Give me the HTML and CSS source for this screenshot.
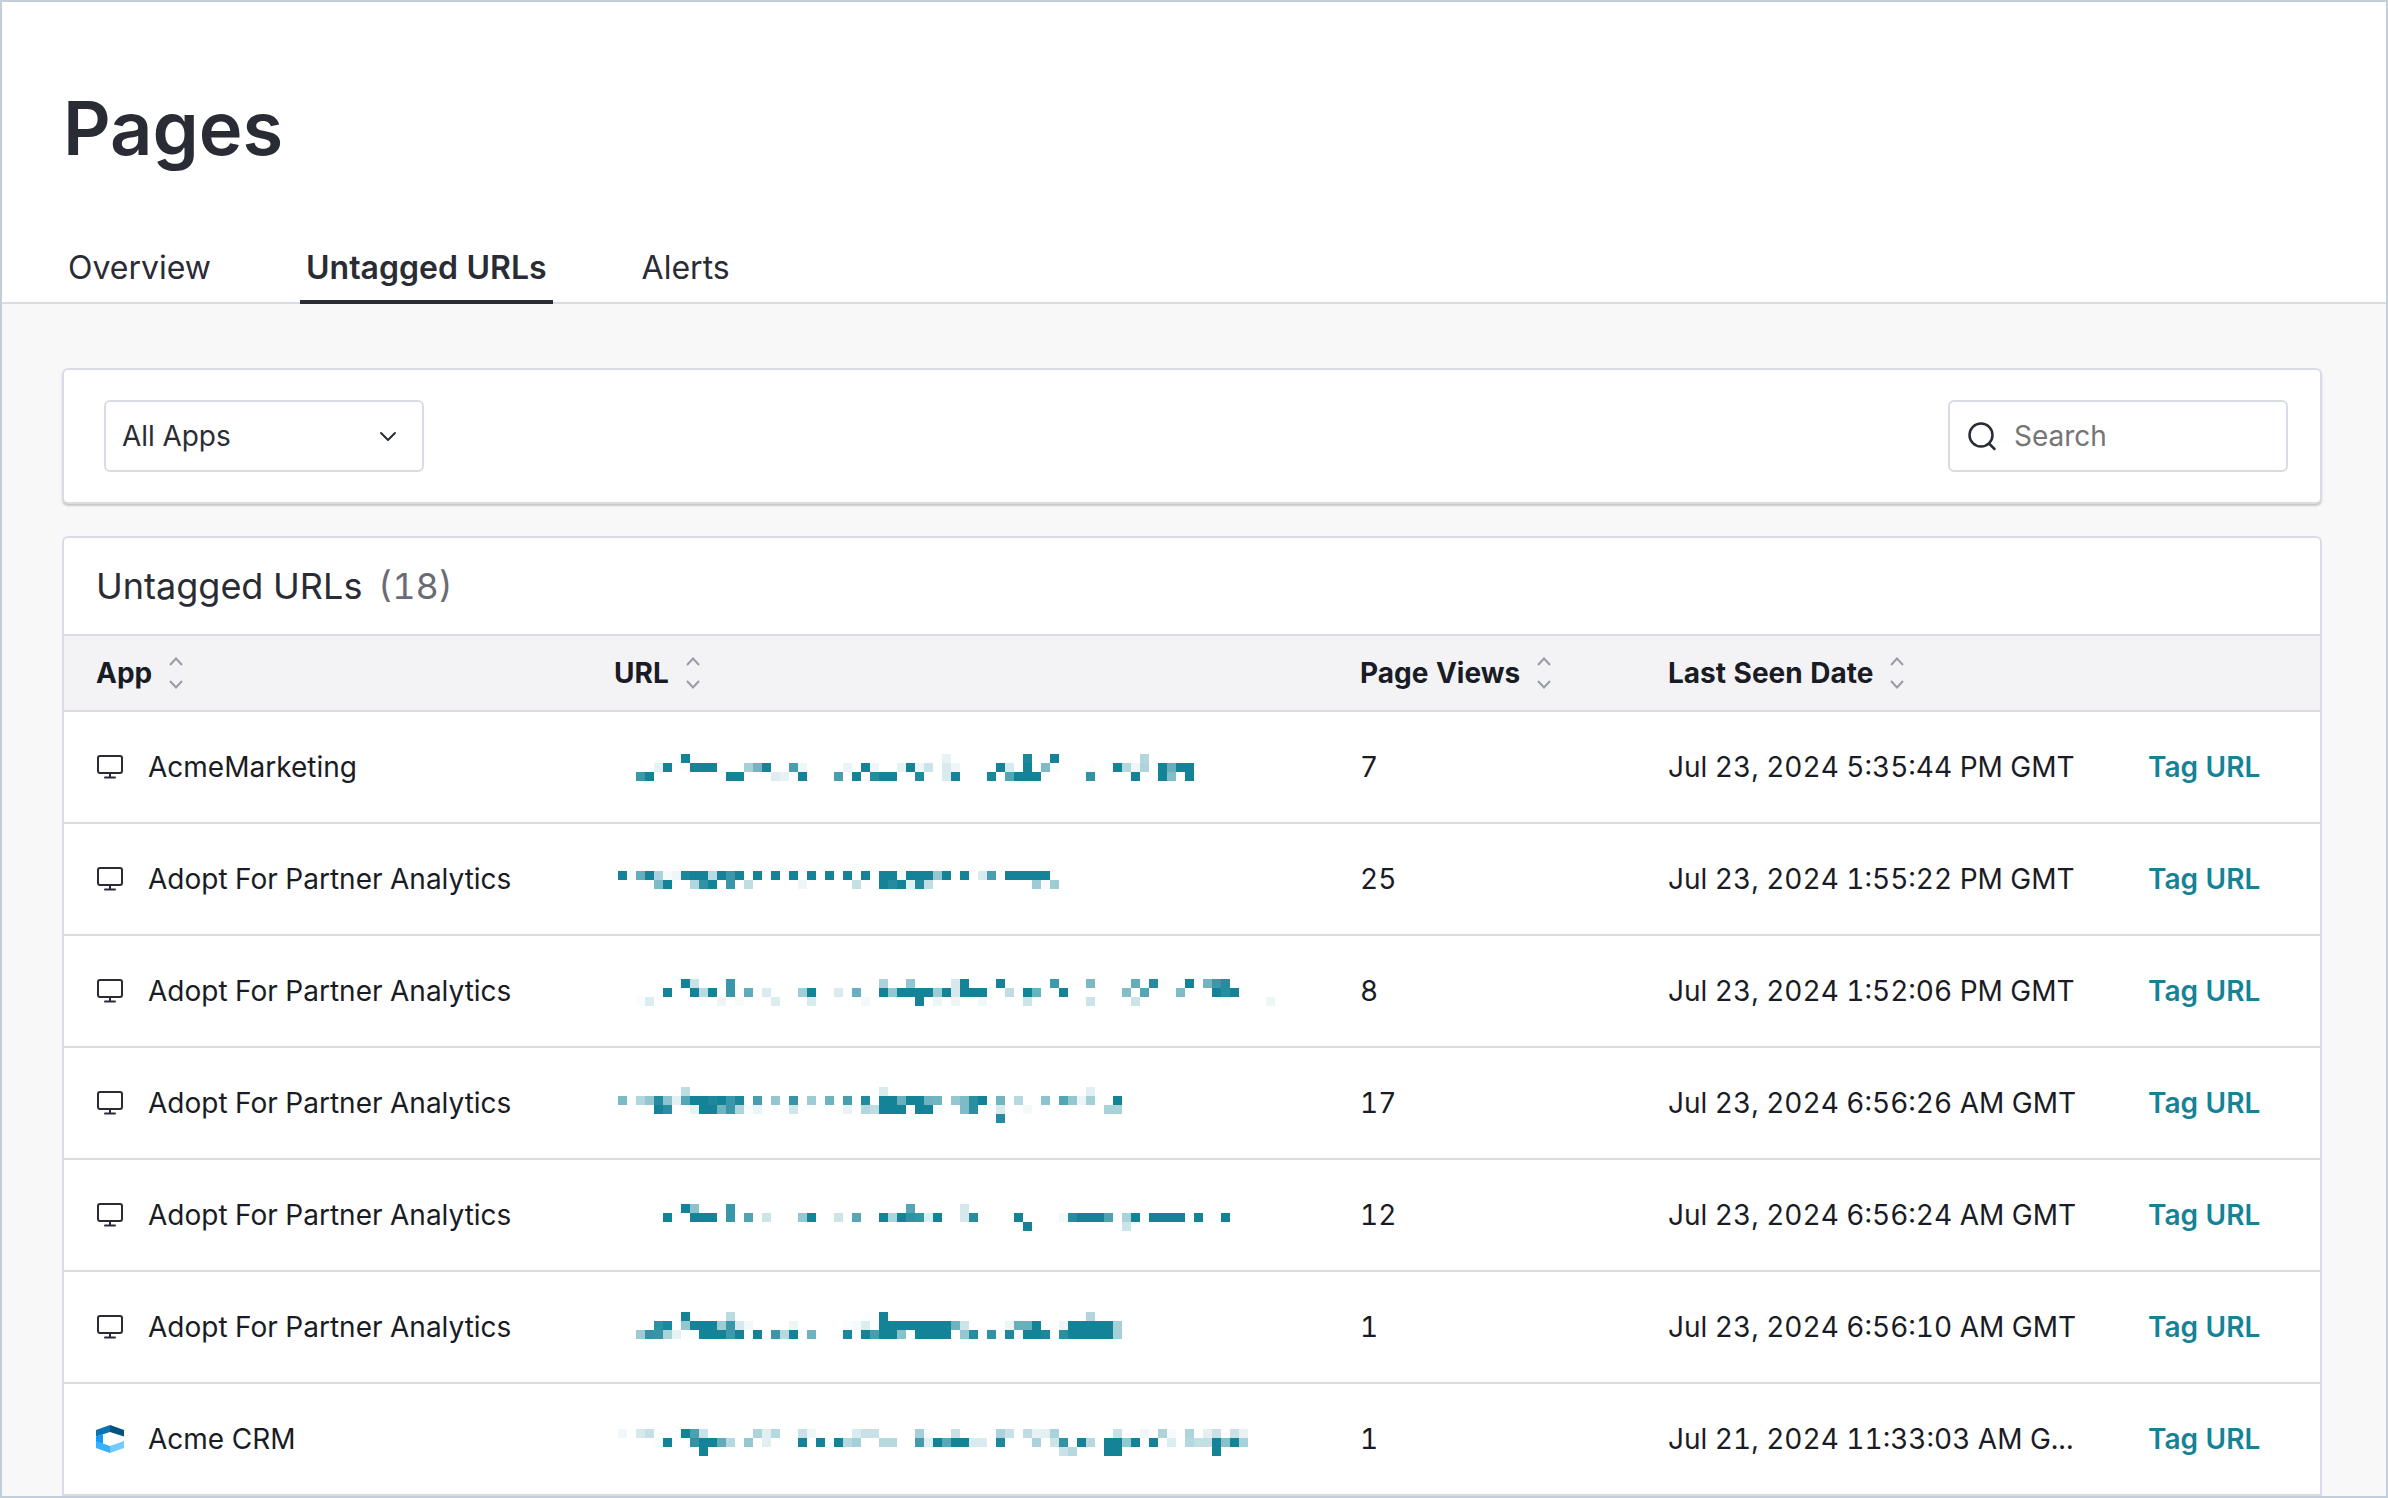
FILE: index.html
```html
<!DOCTYPE html>
<html lang="en">
<head>
    <meta charset="UTF-8">
    <meta name="viewport" content="width=device-width, initial-scale=1.0">
    <title>Pages</title>

    <link rel="stylesheet" href="styles.css">
</head>
<body>
    <svg class="defs" aria-hidden="true">
        <symbol id="monitor" viewBox="0 0 28 28">
            <g fill="none" stroke="#2a2c35" stroke-width="2" stroke-linecap="round">
                <rect x="2" y="3" width="24" height="17" rx="2"/>
                <path d="M14 20v4M9 24.500h10"/>
            </g>
        </symbol>
        <symbol id="sort" viewBox="0 0 16 34">
            <path d="M2 9l6-6.500 6 6.500M2 25l6 6.500 6-6.500" fill="none" stroke="#9a9ca5" stroke-width="2"/>
        </symbol>
        <symbol id="crm" viewBox="0 0 28 28">
            <path d="M0 5l14-5v7L0 11.500z" fill="#0a72b5"/>
            <path d="M14 0l14 5v6.500L14 7z" fill="#04507f"/>
            <path d="M0 11.500L7 9v10l-7-2z" fill="#0d9bf5"/>
            <path d="M0 16l14 5v7L0 23z" fill="#36b0ff"/>
            <path d="M14 21l14-5v7l-14 5z" fill="#72caff"/>
        </symbol>
    </svg>

    <div class="frame">
        <header class="page-header">
            <h1>Pages</h1>
            <nav class="tabs">
                <a href="#overview" class="tab">Overview</a>
                <a href="#untagged" class="tab active" aria-current="page">Untagged URLs</a>
                <a href="#alerts" class="tab">Alerts</a>
            </nav>
        </header>

        <main>
            <div class="panel filters">
                <div class="app-select">
                    <select aria-label="App">
                        <option>All Apps</option>
                    </select>
                    <svg class="chevron" viewBox="0 0 20 20" aria-hidden="true"><path d="M3 7l7 7 7-7" fill="none" stroke="#2a2c35" stroke-width="2" stroke-linecap="round" stroke-linejoin="round"/></svg>
                </div>
                <label class="search">
                    <svg class="search-icon" viewBox="0 0 30 30" aria-hidden="true"><g fill="none" stroke="#2a2c35" stroke-width="2.500" stroke-linecap="round"><circle cx="13" cy="14" r="11.500"/><path d="M21 22.500L26.500 28"/></g></svg>
                    <input type="search" placeholder="Search" aria-label="Search">
                </label>
            </div>

            <section class="panel results">
                <h2>Untagged URLs <span class="count">(18)</span></h2>
                <table>
                    <colgroup>
                        <col class="col-app">
                        <col class="col-url">
                        <col class="col-views">
                        <col class="col-date">
                        <col class="col-action">
                    </colgroup>
                    <thead>
                        <tr>
                            <th><button>App <svg class="sort"><use href="#sort"/></svg></button></th>
                            <th><button>URL <svg class="sort"><use href="#sort"/></svg></button></th>
                            <th><button>Page Views <svg class="sort"><use href="#sort"/></svg></button></th>
                            <th><button>Last Seen Date <svg class="sort"><use href="#sort"/></svg></button></th>
                            <th></th>
                        </tr>
                    </thead>
                    <tbody>
                        <tr>
                            <td><div class="app"><svg class="icon"><use href="#monitor"/></svg>AcmeMarketing</div></td>
                            <td class="url"></td>
                            <td>7</td>
                            <td class="date">Jul 23, 2024 5:35:44 PM GMT</td>
                            <td><a href="#tag" class="tag">Tag URL</a></td>
                        </tr>
                        <tr>
                            <td><div class="app"><svg class="icon"><use href="#monitor"/></svg>Adopt For Partner Analytics</div></td>
                            <td class="url"></td>
                            <td>25</td>
                            <td class="date">Jul 23, 2024 1:55:22 PM GMT</td>
                            <td><a href="#tag" class="tag">Tag URL</a></td>
                        </tr>
                        <tr>
                            <td><div class="app"><svg class="icon"><use href="#monitor"/></svg>Adopt For Partner Analytics</div></td>
                            <td class="url"></td>
                            <td>8</td>
                            <td class="date">Jul 23, 2024 1:52:06 PM GMT</td>
                            <td><a href="#tag" class="tag">Tag URL</a></td>
                        </tr>
                        <tr>
                            <td><div class="app"><svg class="icon"><use href="#monitor"/></svg>Adopt For Partner Analytics</div></td>
                            <td class="url"></td>
                            <td>17</td>
                            <td class="date">Jul 23, 2024 6:56:26 AM GMT</td>
                            <td><a href="#tag" class="tag">Tag URL</a></td>
                        </tr>
                        <tr>
                            <td><div class="app"><svg class="icon"><use href="#monitor"/></svg>Adopt For Partner Analytics</div></td>
                            <td class="url"></td>
                            <td>12</td>
                            <td class="date">Jul 23, 2024 6:56:24 AM GMT</td>
                            <td><a href="#tag" class="tag">Tag URL</a></td>
                        </tr>
                        <tr>
                            <td><div class="app"><svg class="icon"><use href="#monitor"/></svg>Adopt For Partner Analytics</div></td>
                            <td class="url"></td>
                            <td>1</td>
                            <td class="date">Jul 23, 2024 6:56:10 AM GMT</td>
                            <td><a href="#tag" class="tag">Tag URL</a></td>
                        </tr>
                        <tr>
                            <td><div class="app"><svg class="icon"><use href="#crm"/></svg>Acme CRM</div></td>
                            <td class="url"></td>
                            <td>1</td>
                            <td class="date">Jul 21, 2024 11:33:03 AM G...</td>
                            <td><a href="#tag" class="tag">Tag URL</a></td>
                        </tr>
                    </tbody>
                </table>
            </section>
        </main>
    </div>

    <script src="mosaic.js"></script>
</body>
</html>
```
FILE: styles.css
```css
:root {
    --ink: #2a2c35;
    --ink-dark: #1a1c25;
    --gray: #6a6c75;
    --line: #dadce5;
    --teal: #148398;
    --frame: #c2ced9;
}

* {
    box-sizing: border-box;
    margin: 0;
    padding: 0;
}

body {
    font-family: Inter, "Liberation Sans", sans-serif;
    font-size: 28px;
    line-height: 36px;
    font-variant-numeric: tabular-nums;
    color: var(--ink-dark);
}

button, input, select {
    font: inherit;
    color: inherit;
    background: none;
    border: none;
}

a {
    text-decoration: none;
    color: inherit;
}

svg {
    display: block;
    flex: none;
}

.defs {
    display: none;
}

.frame {
    display: flex;
    flex-direction: column;
    min-height: 100vh;
    border: 2px solid var(--frame);
    background-color: #f8f8f8;
}

/* header */
.page-header {
    padding: 82px 60px 0;
    background-color: #fff;
    border-bottom: 2px solid var(--line);
    color: var(--ink);
}

h1 {
    padding-left: 1px;
    font-size: 74px;
    font-weight: 600;
    line-height: 88px;
}

.tabs {
    display: flex;
    gap: 83px;
    margin-top: 58px;
    margin-bottom: -2px;
}

.tab {
    height: 74px;
    padding: 16px 6px 0;
    font-size: 32px;
    line-height: 44px;
}

.tab.active {
    font-weight: 600;
    border-bottom: 4px solid var(--ink);
}

/* panels */
main {
    display: flex;
    flex: 1;
    flex-direction: column;
    gap: 32px;
    padding: 64px 64px 0 60px;
}

.panel {
    border: 2px solid var(--line);
    border-radius: 6px;
    background-color: #fff;
}

.filters {
    display: flex;
    justify-content: space-between;
    padding: 30px 32px 30px 40px;
    box-shadow: 0 2px 2px #c8c8c8;
}

.app-select {
    display: flex;
    position: relative;
    width: 320px;
    height: 72px;
}

.app-select select {
    width: 100%;
    padding: 0 16px;
    appearance: none;
    border: 2px solid var(--line);
    border-radius: 6px;
    color: var(--ink);
}

.chevron {
    position: absolute;
    top: 26px;
    right: 26px;
    width: 20px;
    height: 20px;
    pointer-events: none;
}

.search {
    display: flex;
    align-items: center;
    gap: 16px;
    width: 340px;
    height: 72px;
    padding: 0 18px;
    border: 2px solid var(--line);
    border-radius: 6px;
}

.search-icon {
    width: 30px;
    height: 30px;
}

.search input {
    flex: 1;
    min-width: 0;
    outline: none;
}

.search input::placeholder {
    color: #757575;
}

.results {
    flex: 1;
    border-bottom: none;
    border-radius: 6px 6px 0 0;
}

h2 {
    padding: 26px 32px;
    font-size: 36px;
    font-weight: 400;
    line-height: 44px;
    color: var(--ink);
    border-bottom: 2px solid var(--line);
}

.count {
    margin-left: 6px;
    color: var(--gray);
}

/* table */
table {
    width: 100%;
    table-layout: fixed;
    border-collapse: separate;
    border-spacing: 0;
}

.col-app {
    width: 518px;
}
.col-views {
    width: 308px;
}
.col-date {
    width: 480px;
}
.col-action {
    width: 204px;
}

th, td {
    padding: 0 32px;
    text-align: left;
    vertical-align: middle;
    white-space: nowrap;
    border-bottom: 2px solid var(--line);
}

th {
    height: 76px;
    background-color: #f3f3f6;
}

th button {
    display: flex;
    align-items: center;
    gap: 16px;
    font-weight: 700;
}

.sort {
    width: 16px;
    height: 34px;
}

td {
    height: 112px;
}

.app {
    display: flex;
    align-items: center;
    gap: 24px;
}

.icon {
    width: 28px;
    height: 28px;
}

td.url {
    padding: 0 36px;
}

.mosaic {
    width: 664px;
    height: 110px;
    fill: var(--teal);
}

.date {
    overflow: hidden;
    text-overflow: ellipsis;
}

.tag {
    font-weight: 600;
    color: var(--teal);
}
```
FILE: mosaic.js
```js
// Redacted URLs, drawn as a mosaic of 9px cells.
// Each line lists "column" or "from-to", then "=opacity in percent" if not solid.
const CELL = 9;

const mosaics = [
    { top: 42, lines: [
        '7 8=2 36=10 45=97 48 58=32',
        '4=10 5 7=2 8-10 14=38 15=60 16 19=78 20=7 25=9 27 28=7 31=10 32 33=7 34=22 36=17 37=7 42 43=17 45 47=55 48=2 52=2 55 56=32 57=7 58=35 60 61=65 62-63',
        '2=83 3 12-13 17=14 18=10 20 24=78 26 28=92 29-30 33=95 36=17 37 41=97 43=73 44-46 52=88 57 60 61=53 63'
    ] },
    { top: 47, lines: [
        '0 1=4 2=66 3 4=36 5=4 6=7 7=97 8-9 10=30 11 12=84 13 15 17 19 21 23 25 27 29-30 31=4 32-34 35=45 36 38 40=17 41=78 43-47',
        '4=55 5 8=33 9=88 10 12=84 14=27 20=7 26=25 29 30=93 31 32=12 33=94 34=27 46=41 47=4 48=41'
    ] },
    { top: 43, lines: [
        '7 8=23 12=84 29=36 32=46 37=18 38 42 48=82 52=56 57=66 59=93 60=2 63 65=60 66=83 67=92',
        '5 8 9=30 10 12=84 14=68 16=16 20=40 21 24=16 26=64 29 30=45 31-34 35=41 36 37=18 38-40 43=28 45 46=63 49 56=53 58=72 62=55 66 67=92 68',
        '2=2 3=15 9=2 11=8 13=4 17=15 21=17 27=5 33 35=8 37=8 40=6 45=22 52=22 57=22 67=2 72=7'
    ] },
    { top: 39, lines: [
        '7=28 29=16 52=13',
        '0=56 1=2 2=33 3=46 4=93 5=48 6=12 7=72 8-9 10=96 11 12=84 13=96 15=78 17=46 19=85 21=41 23=61 25=78 27=94 29-30 31=64 32-33 34=61 35=60 37=45 38=55 39=91 40 42=60 44=31 47=49 49=72 50=45 51=8 52=38 55',
        '4 5=91 8=10 9-10 11=61 12=84 13=34 14=2 15=9 19=20 25=9 27=32 28=27 29-31 33-34 35=2 38=55 39=91 42=17 45=5 54-55=36',
        '42=93'
    ] },
    { top: 44, lines: [
        '7 8=49 12=84 32=72 38=18',
        '5 8-10 12=84 14=74 16=21 20=45 21 24=21 26=71 29 30=34 31 32=88 33=86 34=14 35 38=18 39=92 44 49=6 50=92 51-53 54=75 56=36 57 59-62 64 67',
        '45 56=22'
    ] },
    { top: 40, lines: [
        '7 12=29 29 52=33',
        '4=89 5=97 7=45 8-10 11=41 12=84 13=18 14=5 19=8 25=2 26=4 27=15 29-36 37=62 38=21 43=8 44-45=64 46 49=8 50-54 55=38',
        '2=42 3=87 4=85 5=36 6=10 9-11 12=82 13 15 17=84 18=31 19 21=61 25=97 27 28=79 29-30 31=50 33-36 38=45 39=92 41=88 43=96 44=4 45-46 47=96 49=90 50-54 55=38'
    ] },
    { top: 45, lines: [
        '0=6 2=18 3=25 7 8=76 9=23 15=35 16=13 17=31 20=24 21=7 26=16 27-28=24 33=39 34=4 37=24 42=36 43=24 45=28 46=10 47=12 48=36 55=24 58=7 60=35 61=4 63=35 65=12 66=24 68=24 69=10',
        '4=2 5 8=87 9-10 11=67 12=31 14=45 16=13 20 22 24 25=31 26=38 29-30=31 33=80 34=13 35 36=70 37-38 39-40=16 42=96 46=36 48=22 49=87 51 52=31 54-55 56=45 57 59 61=15 63=32 64-65=26 66 67=50 68 69=37',
        '9 49=23 50=31 54-55 66'
    ] }
];

document.querySelectorAll('td.url').forEach((cell, index) => {
    const { top, lines } = mosaics[index];
    let rects = '';
    lines.forEach((line, row) => {
        line.split(' ').forEach((run) => {
            const [range, opacity = 100] = run.split('=');
            const [from, to = from] = range.split('-').map(Number);
            rects += `<rect x="${from * CELL}" y="${top + row * CELL}" width="${(to - from + 1) * CELL}" height="${CELL}" opacity="${opacity / 100}"/>`;
        });
    });
    cell.innerHTML = `<svg class="mosaic" shape-rendering="crispEdges" aria-hidden="true">${rects}</svg>`;
});
```
